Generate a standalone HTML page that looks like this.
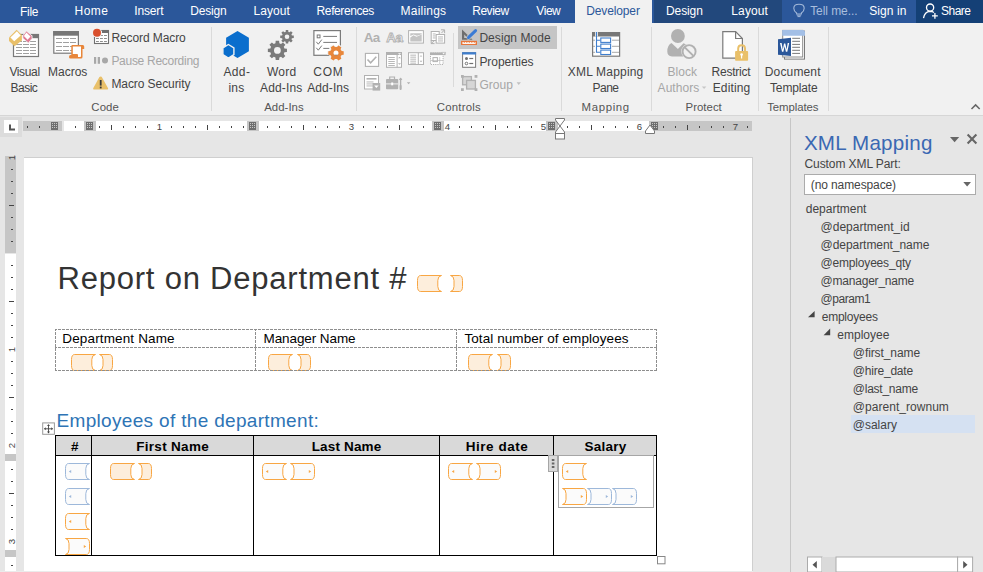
<!DOCTYPE html><html><head><meta charset="utf-8"><style>
html,body{margin:0;padding:0;}
body{width:983px;height:572px;overflow:hidden;position:relative;background:#E6E6E6;font-family:"Liberation Sans",sans-serif;}
.t{position:absolute;white-space:nowrap;line-height:1;}
.r{position:absolute;}
</style></head><body>

<div class="r" style="left:0px;top:0px;width:983px;height:23px;background:#2B579A"></div>
<div class="r" style="left:575px;top:0px;width:77px;height:23px;background:#F1F1F1"></div>
<div class="r" style="left:654px;top:0px;width:128px;height:23px;background:#22487C"></div>
<div class="r" style="left:916px;top:0px;width:67px;height:23px;background:#144076"></div>
<div class="t " style="left:20px;top:5.84px;font-size:12px;color:#FFFFFF;font-weight:normal;letter-spacing:-0.300px;">File</div>
<div class="t " style="left:74.5px;top:4.84px;font-size:12px;color:#FFFFFF;font-weight:normal;letter-spacing:0.500px;">Home</div>
<div class="t " style="left:134.3px;top:4.84px;font-size:12px;color:#FFFFFF;font-weight:normal;letter-spacing:-0.160px;">Insert</div>
<div class="t " style="left:190.2px;top:4.84px;font-size:12px;color:#FFFFFF;font-weight:normal;letter-spacing:-0.180px;">Design</div>
<div class="t " style="left:253.5px;top:4.84px;font-size:12px;color:#FFFFFF;font-weight:normal;letter-spacing:0.080px;">Layout</div>
<div class="t " style="left:316.6px;top:4.84px;font-size:12px;color:#FFFFFF;font-weight:normal;letter-spacing:-0.400px;">References</div>
<div class="t " style="left:400.6px;top:4.84px;font-size:12px;color:#FFFFFF;font-weight:normal;letter-spacing:0.200px;">Mailings</div>
<div class="t " style="left:472.2px;top:4.84px;font-size:12px;color:#FFFFFF;font-weight:normal;letter-spacing:-0.460px;">Review</div>
<div class="t " style="left:536.3px;top:4.84px;font-size:12px;color:#FFFFFF;font-weight:normal;letter-spacing:-0.433px;">View</div>
<div class="t " style="left:586.2px;top:4.84px;font-size:12px;color:#2B579A;font-weight:normal;letter-spacing:-0.125px;">Developer</div>
<div class="t " style="left:666px;top:4.84px;font-size:12px;color:#FFFFFF;font-weight:normal;letter-spacing:-0.100px;">Design</div>
<div class="t " style="left:731.3px;top:4.84px;font-size:12px;color:#FFFFFF;font-weight:normal;letter-spacing:0.120px;">Layout</div>
<div class="t " style="left:810.2px;top:4.84px;font-size:12px;color:#A9BEDD;font-weight:normal;letter-spacing:-0.067px;">Tell me...</div>
<div class="t " style="left:869.2px;top:4.84px;font-size:12px;color:#FFFFFF;font-weight:normal;letter-spacing:0.100px;">Sign in</div>
<div class="t " style="left:941px;top:4.84px;font-size:12px;color:#FFFFFF;font-weight:normal;letter-spacing:-0.500px;">Share</div>
<svg class="r" style="left:0;top:0" width="983" height="23" viewBox="0 0 983 23"><path d="M796.6,13 Q793.8,11 793.8,8.2 Q793.8,4.3 799,4.3 Q804.2,4.3 804.2,8.2 Q804.2,11 801.4,13 L801.4,14 L796.6,14 Z" fill="none" stroke="#A3B9D9" stroke-width="1.1"/><path d="M796.8,15.2 L801.2,15.2 M797.5,16.6 L800.5,16.6" stroke="#A3B9D9" stroke-width="1"/><circle cx="930.1" cy="7.6" r="3.6" fill="none" stroke="#fff" stroke-width="1.3"/><path d="M923.5,18.2 Q924.5,11.8 930.1,11.4 Q932.5,11.5 934,12.5" fill="none" stroke="#fff" stroke-width="1.3"/><path d="M934.9,13 L934.9,18.8 M932,15.9 L937.8,15.9" stroke="#fff" stroke-width="1.3"/></svg>
<div class="r" style="left:0px;top:23px;width:983px;height:92px;background:#F1F1F1"></div>
<div class="r" style="left:0px;top:115px;width:983px;height:1px;background:#D6D6D6"></div>
<div class="r" style="left:211px;top:27px;width:1px;height:84px;background:#DADADA"></div>
<div class="r" style="left:356px;top:27px;width:1px;height:84px;background:#DADADA"></div>
<div class="r" style="left:561px;top:27px;width:1px;height:84px;background:#DADADA"></div>
<div class="r" style="left:651px;top:27px;width:1px;height:84px;background:#DADADA"></div>
<div class="r" style="left:758px;top:27px;width:1px;height:84px;background:#DADADA"></div>
<div class="r" style="left:828px;top:27px;width:1px;height:84px;background:#DADADA"></div>
<div class="r" style="left:453px;top:33px;width:1px;height:54px;background:#DADADA"></div>
<div class="t " style="left:91.3px;top:102.35px;font-size:11.4px;color:#555555;font-weight:normal;letter-spacing:0.133px;">Code</div>
<div class="t " style="left:264.2px;top:102.35px;font-size:11.4px;color:#555555;font-weight:normal;letter-spacing:0.033px;">Add-Ins</div>
<div class="t " style="left:436.7px;top:102.35px;font-size:11.4px;color:#555555;font-weight:normal;letter-spacing:0.243px;">Controls</div>
<div class="t " style="left:581.6px;top:102.35px;font-size:11.4px;color:#555555;font-weight:normal;letter-spacing:0.650px;">Mapping</div>
<div class="t " style="left:685.6px;top:102.35px;font-size:11.4px;color:#555555;font-weight:normal;letter-spacing:0.017px;">Protect</div>
<div class="t " style="left:767.2px;top:102.35px;font-size:11.4px;color:#555555;font-weight:normal;letter-spacing:-0.088px;">Templates</div>
<div class="t " style="left:9.4px;top:65.84px;font-size:12px;color:#444444;font-weight:normal;letter-spacing:-0.360px;">Visual</div>
<div class="t " style="left:10.6px;top:81.84px;font-size:12px;color:#444444;font-weight:normal;letter-spacing:-0.525px;">Basic</div>
<div class="t " style="left:48px;top:65.84px;font-size:12px;color:#444444;font-weight:normal;letter-spacing:0.000px;">Macros</div>
<div class="t " style="left:111.4px;top:31.84px;font-size:12px;color:#444444;font-weight:normal;letter-spacing:-0.091px;">Record Macro</div>
<div class="t " style="left:111.4px;top:54.84px;font-size:12px;color:#A6A6A6;font-weight:normal;letter-spacing:-0.286px;">Pause Recording</div>
<div class="t " style="left:111.4px;top:77.84px;font-size:12px;color:#444444;font-weight:normal;letter-spacing:-0.077px;">Macro Security</div>
<div class="t " style="left:223.4px;top:65.84px;font-size:12px;color:#444444;font-weight:normal;letter-spacing:0.400px;">Add-</div>
<div class="t " style="left:228.5px;top:81.84px;font-size:12px;color:#444444;font-weight:normal;letter-spacing:0.150px;">ins</div>
<div class="t " style="left:267px;top:65.84px;font-size:12px;color:#444444;font-weight:normal;letter-spacing:0.200px;">Word</div>
<div class="t " style="left:260px;top:81.84px;font-size:12px;color:#444444;font-weight:normal;letter-spacing:0.167px;">Add-Ins</div>
<div class="t " style="left:313.3px;top:65.84px;font-size:12px;color:#444444;font-weight:normal;letter-spacing:0.700px;">COM</div>
<div class="t " style="left:307.3px;top:81.84px;font-size:12px;color:#444444;font-weight:normal;letter-spacing:0.067px;">Add-Ins</div>
<div class="r" style="left:458px;top:26px;width:99px;height:23px;background:#C5C5C5"></div>
<div class="t " style="left:479.4px;top:32.14px;font-size:12px;color:#444444;font-weight:normal;letter-spacing:0.060px;">Design Mode</div>
<div class="t " style="left:479.4px;top:55.64px;font-size:12px;color:#444444;font-weight:normal;letter-spacing:-0.056px;">Properties</div>
<div class="t " style="left:479.4px;top:78.54px;font-size:12px;color:#A6A6A6;font-weight:normal;letter-spacing:0.050px;">Group</div>
<div class="t " style="left:567.8px;top:65.84px;font-size:12px;color:#444444;font-weight:normal;letter-spacing:0.190px;">XML Mapping</div>
<div class="t " style="left:592.5px;top:81.84px;font-size:12px;color:#444444;font-weight:normal;letter-spacing:-0.500px;">Pane</div>
<div class="t " style="left:667.4px;top:65.84px;font-size:12px;color:#A6A6A6;font-weight:normal;letter-spacing:0.050px;">Block</div>
<div class="t " style="left:657.6px;top:81.84px;font-size:12px;color:#A6A6A6;font-weight:normal;letter-spacing:0.050px;">Authors</div>
<div class="t " style="left:711.5px;top:65.84px;font-size:12px;color:#444444;font-weight:normal;letter-spacing:-0.214px;">Restrict</div>
<div class="t " style="left:712.7px;top:81.84px;font-size:12px;color:#444444;font-weight:normal;letter-spacing:0.150px;">Editing</div>
<div class="t " style="left:764.8px;top:65.84px;font-size:12px;color:#444444;font-weight:normal;letter-spacing:0.143px;">Document</div>
<div class="t " style="left:770px;top:81.84px;font-size:12px;color:#444444;font-weight:normal;letter-spacing:-0.143px;">Template</div>
<svg class="r" style="left:0;top:0" width="983" height="120" viewBox="0 0 983 120"><rect x="13.5" y="34.5" width="25" height="22" fill="#fff" stroke="#7A7A7A" stroke-width="1.2"/><rect x="32.2" y="34.2" width="6.8" height="4" fill="#777"/><rect x="16" y="41.0" width="6" height="1" fill="#A0A0A0"/><rect x="23" y="41.0" width="6" height="1" fill="#A0A0A0"/><rect x="30" y="41.0" width="6" height="1" fill="#A0A0A0"/><rect x="16" y="44.0" width="6" height="1" fill="#A0A0A0"/><rect x="23" y="44.0" width="6" height="1" fill="#A0A0A0"/><rect x="30" y="44.0" width="6" height="1" fill="#A0A0A0"/><rect x="16" y="47.0" width="6" height="1" fill="#A0A0A0"/><rect x="23" y="47.0" width="6" height="1" fill="#A0A0A0"/><rect x="30" y="47.0" width="6" height="1" fill="#A0A0A0"/><rect x="16" y="50.0" width="6" height="1" fill="#A0A0A0"/><rect x="23" y="50.0" width="6" height="1" fill="#A0A0A0"/><rect x="30" y="50.0" width="6" height="1" fill="#A0A0A0"/><rect x="16" y="53.0" width="6" height="1" fill="#A0A0A0"/><rect x="23" y="53.0" width="6" height="1" fill="#A0A0A0"/><rect x="30" y="53.0" width="6" height="1" fill="#A0A0A0"/><path d="M16.6,29.8 L21.9,35.1 L21.9,40.4 L14.5,46.3 L9,41 L9,37.4 Z" fill="#E9C06A"/><path d="M16.9,31.3 L20.7,35.4 L14.2,41.3 L10.4,37.5 Z" fill="#fff"/><path d="M26.4,30.9 L32,35.9 L32,38.4 L28.5,43.1 L22.9,38.2 L22.9,35.6 Z" fill="#E17A93" stroke="#F1F1F1" stroke-width="0.8"/><path d="M26.4,32.6 L30.5,36.6 L27.6,39.8 L23.9,36 Z" fill="#fff"/><rect x="53.8" y="31.6" width="24.6" height="21.6" fill="#fff" stroke="#7A7A7A" stroke-width="1.2"/><rect x="53.2" y="31.1" width="25.7" height="4.6" fill="#777"/><rect x="56" y="38.0" width="6" height="1" fill="#A0A0A0"/><rect x="63" y="38.0" width="6" height="1" fill="#A0A0A0"/><rect x="70" y="38.0" width="6" height="1" fill="#A0A0A0"/><rect x="56" y="42.0" width="6" height="1" fill="#A0A0A0"/><rect x="63" y="42.0" width="6" height="1" fill="#A0A0A0"/><rect x="70" y="42.0" width="6" height="1" fill="#A0A0A0"/><rect x="56" y="46.0" width="6" height="1" fill="#A0A0A0"/><rect x="63" y="46.0" width="6" height="1" fill="#A0A0A0"/><rect x="70" y="46.0" width="6" height="1" fill="#A0A0A0"/><rect x="56" y="50.0" width="6" height="1" fill="#A0A0A0"/><rect x="63" y="50.0" width="6" height="1" fill="#A0A0A0"/><rect x="70" y="50.0" width="6" height="1" fill="#A0A0A0"/><path d="M71.3,46.2 Q71.3,45 72.5,45 L82.8,45 Q84.2,45 84.2,46.5 L84.2,49 L82.5,49 L82.5,57 Q82.5,58.6 81,58.6 L70.5,58.6 Q69,58.6 69,57 Q69,55 70.5,55 L71.3,55 Z" fill="#E8863A"/><path d="M72.8,46.6 L81,46.6 L81,56.2 Q81,57 80,57 L78,57 L78,55 Q78,54 77,54 L72.8,54 Z" fill="#fff"/><rect x="94.5" y="30.5" width="14" height="13" fill="#fff" stroke="#707070" stroke-width="1.1"/><rect x="102" y="30" width="7" height="3" fill="#6F6F6F"/><rect x="96" y="35" width="2.9" height="1" fill="#8E8E8E"/><rect x="100" y="35" width="2.9" height="1" fill="#8E8E8E"/><rect x="104" y="35" width="2.9" height="1" fill="#8E8E8E"/><rect x="96" y="38" width="2.9" height="1" fill="#8E8E8E"/><rect x="100" y="38" width="2.9" height="1" fill="#8E8E8E"/><rect x="104" y="38" width="2.9" height="1" fill="#8E8E8E"/><rect x="96" y="41" width="2.9" height="1" fill="#8E8E8E"/><rect x="100" y="41" width="2.9" height="1" fill="#8E8E8E"/><rect x="104" y="41" width="2.9" height="1" fill="#8E8E8E"/><circle cx="97" cy="32.8" r="4.9" fill="#F1F1F1"/><circle cx="97" cy="32.8" r="4" fill="#D9502E"/><rect x="94" y="57" width="2.2" height="6.8" fill="#A8A8A8"/><rect x="97.7" y="57" width="2.3" height="6.8" fill="#A8A8A8"/><circle cx="105" cy="60.4" r="3" fill="#A8A8A8"/><path d="M100.6,76.6 Q101.3,76.2 101.8,77 L108.1,88.3 Q108.4,89.6 107.2,89.6 L94,89.6 Q92.8,89.6 93.2,88.3 L99.4,77 Z" fill="#E9C06A"/><rect x="99.8" y="80" width="1.8" height="5.6" fill="#3A3A3A"/><rect x="99.8" y="86.6" width="1.8" height="1.8" fill="#3A3A3A"/><path d="M237.5,31.1 L248.9,37.8 L248.9,51.3 L237.5,58 L226.1,51.3 L226.1,37.8 Z" fill="#0A6ECD"/><path d="M228.4,44.5 L233.9,47.9 L233.9,54.6 L228.4,58 L222.9,54.6 L222.9,47.9 Z" fill="#0A6ECD" stroke="#F1F1F1" stroke-width="1.4"/><path d="M275.45,43.37 L275.69,40.85 L279.11,40.85 L279.35,43.37 L280.99,44.04 L282.95,42.44 L285.36,44.85 L283.76,46.81 L284.43,48.45 L286.95,48.69 L286.95,52.11 L284.43,52.35 L283.76,53.99 L285.36,55.95 L282.95,58.36 L280.99,56.76 L279.35,57.43 L279.11,59.95 L275.69,59.95 L275.45,57.43 L273.81,56.76 L271.85,58.36 L269.44,55.95 L271.04,53.99 L270.37,52.35 L267.85,52.11 L267.85,48.69 L270.37,48.45 L271.04,46.81 L269.44,44.85 L271.85,42.44 L273.81,44.04 Z M280.80,50.40 A3.4,3.4 0 1 0 274.00,50.40 A3.4,3.4 0 1 0 280.80,50.40 Z" fill="#7A7A7A" fill-rule="evenodd"/><path d="M285.63,31.89 L285.79,30.01 L288.21,30.01 L288.37,31.89 L289.51,32.36 L290.95,31.14 L292.66,32.85 L291.44,34.29 L291.91,35.43 L293.79,35.59 L293.79,38.01 L291.91,38.17 L291.44,39.31 L292.66,40.75 L290.95,42.46 L289.51,41.24 L288.37,41.71 L288.21,43.59 L285.79,43.59 L285.63,41.71 L284.49,41.24 L283.05,42.46 L281.34,40.75 L282.56,39.31 L282.09,38.17 L280.21,38.01 L280.21,35.59 L282.09,35.43 L282.56,34.29 L281.34,32.85 L283.05,31.14 L284.49,32.36 Z M289.30,36.80 A2.3,2.3 0 1 0 284.70,36.80 A2.3,2.3 0 1 0 289.30,36.80 Z" fill="#7A7A7A" fill-rule="evenodd"/><rect x="313.9" y="30.6" width="26.5" height="24.7" fill="#fff" stroke="#7A7A7A" stroke-width="1.2"/><rect x="317.2" y="35" width="2.8" height="2.8" fill="none" stroke="#7A7A7A" stroke-width="1"/><rect x="323.3" y="35.9" width="13.7" height="1" fill="#7A7A7A"/><rect x="323.3" y="41.9" width="13.7" height="1" fill="#7A7A7A"/><rect x="323.3" y="47.9" width="6" height="1" fill="#7A7A7A"/><path d="M316.3,41.8 L318.3,44.2 L321.8,39.6 M316.3,47.8 L318.3,50.2 L321.8,45.6" fill="none" stroke="#7A7A7A" stroke-width="1"/><path d="M342.80,50.63 L344.80,51.13 L344.80,54.87 L342.80,55.37 L341.45,57.70 L342.02,59.69 L338.78,61.56 L337.35,60.07 L334.65,60.07 L333.22,61.56 L329.98,59.69 L330.55,57.70 L329.20,55.37 L327.20,54.87 L327.20,51.13 L329.20,50.63 L330.55,48.30 L329.98,46.31 L333.22,44.44 L334.65,45.93 L337.35,45.93 L338.78,44.44 L342.02,46.31 L341.45,48.30 Z M339.60,53.00 A3.6,3.6 0 1 0 332.40,53.00 A3.6,3.6 0 1 0 339.60,53.00 Z" fill="#F1F1F1"/><path d="M341.65,50.97 L343.71,51.28 L343.71,54.72 L341.65,55.03 L340.58,56.87 L341.35,58.82 L338.36,60.54 L337.06,58.91 L334.94,58.91 L333.64,60.54 L330.65,58.82 L331.42,56.87 L330.35,55.03 L328.29,54.72 L328.29,51.28 L330.35,50.97 L331.42,49.13 L330.65,47.18 L333.64,45.46 L334.94,47.09 L337.06,47.09 L338.36,45.46 L341.35,47.18 L340.58,49.13 Z M338.50,53.00 A2.5,2.5 0 1 0 333.50,53.00 A2.5,2.5 0 1 0 338.50,53.00 Z" fill="#E8863A" fill-rule="evenodd"/><path d="M971.5,109 L975.6,104.9 L979.7,109" fill="none" stroke="#666" stroke-width="1.5"/></svg>
<svg class="r" style="left:0;top:0" width="983" height="120" viewBox="0 0 983 120"><text x="363.8" y="41.6" font-family="Liberation Sans" font-weight="bold" font-size="13.4" fill="#B1B1B1" letter-spacing="-0.6">Aa</text><text x="386.3" y="41.6" font-family="Liberation Sans" font-weight="bold" font-size="13.4" fill="#FFFFFF" stroke="#B1B1B1" stroke-width="0.9" letter-spacing="-0.5">Aa</text><rect x="408.6" y="30.6" width="14.8" height="12.5" fill="#fff" stroke="#B1B1B1" stroke-width="1"/><path d="M410.3,37.5 L413.5,35.3 L416.5,36.8 L421.7,34.5 L421.7,41.5 L410.3,41.5 Z" fill="#C4C4C4"/><path d="M410.3,33.2 L421.7,33.2 L421.7,34.2 L417,35.8 L413.5,34.5 L410.3,36 Z" fill="#C4C4C4"/><rect x="431.2" y="31.5" width="8" height="9" fill="#fff" stroke="#B1B1B1" stroke-width="1"/><rect x="436.2" y="34.5" width="8.4" height="8.6" fill="#fff" stroke="#B1B1B1" stroke-width="1"/><rect x="438" y="36.5" width="5" height="0.9" fill="#B1B1B1"/><rect x="438" y="38.5" width="5" height="0.9" fill="#B1B1B1"/><rect x="438" y="40.5" width="5" height="0.9" fill="#B1B1B1"/><rect x="432.8" y="33.5" width="2.8" height="0.9" fill="#B1B1B1"/><rect x="432.8" y="35.5" width="2.8" height="0.9" fill="#B1B1B1"/><rect x="432.8" y="37.5" width="2.8" height="0.9" fill="#B1B1B1"/><path d="M441,29.8 L444.6,29.8 L444.6,33.2 M444.4,30 L441.5,33" fill="none" stroke="#B1B1B1" stroke-width="1"/><path d="M431,43.6 L434.5,43.6 M431.2,40.4 L431.2,43.6 L434,40.9" fill="none" stroke="#B1B1B1" stroke-width="1"/><rect x="365.4" y="53.4" width="13.2" height="13" fill="#fff" stroke="#B1B1B1" stroke-width="1.1"/><path d="M367.5,59.5 L370.6,62.8 L376.3,56.8" fill="none" stroke="#B1B1B1" stroke-width="1.6"/><rect x="386.5" y="52.5" width="15" height="14.8" fill="#fff" stroke="#B1B1B1" stroke-width="1"/><rect x="386.5" y="52.5" width="15" height="2.5" fill="#B1B1B1"/><rect x="396.6" y="52.5" width="1" height="14.8" fill="#B1B1B1"/><rect x="388.3" y="57" width="6.5" height="0.9" fill="#B1B1B1"/><rect x="388.3" y="59" width="6.5" height="0.9" fill="#B1B1B1"/><rect x="388.3" y="61" width="6.5" height="0.9" fill="#B1B1B1"/><rect x="388.3" y="63" width="6.5" height="0.9" fill="#B1B1B1"/><rect x="388.3" y="65" width="6.5" height="0.9" fill="#B1B1B1"/><path d="M398,53.3 L401,53.3 L399.5,54.8 Z M398,57.8 L401,57.8 L399.5,56.3 Z M398,63.5 L401,63.5 L399.5,65 Z" fill="#fff"/><path d="M398,58.2 L401,58.2 L399.5,56.7 Z M398,63.2 L401,63.2 L399.5,64.7 Z" fill="#B1B1B1"/><rect x="408.5" y="52.7" width="15" height="11.8" fill="#fff" stroke="#B1B1B1" stroke-width="1"/><rect x="417.8" y="52.7" width="1" height="11.8" fill="#B1B1B1"/><rect x="410.3" y="54.7" width="5.8" height="0.9" fill="#B1B1B1"/><rect x="410.3" y="56.7" width="5.8" height="0.9" fill="#B1B1B1"/><rect x="410.3" y="58.7" width="5.8" height="0.9" fill="#B1B1B1"/><rect x="410.3" y="60.7" width="5.8" height="0.9" fill="#B1B1B1"/><rect x="410.3" y="62.7" width="5.8" height="0.9" fill="#B1B1B1"/><path d="M419.6,56.6 L422.4,56.6 L421,55.2 Z M419.6,60.8 L422.4,60.8 L421,62.2 Z" fill="#B1B1B1"/><rect x="430.5" y="53" width="12.6" height="11.5" fill="#fff" stroke="#B1B1B1" stroke-width="1" stroke-dasharray="1.2,1"/><rect x="430" y="52.5" width="15.6" height="2.6" fill="#B1B1B1"/><path d="M441.6,52.4 L445.7,52.4 L443.65,54.5 Z" fill="#fff" stroke="#B1B1B1" stroke-width="0.6"/><rect x="433" y="57.6" width="4.4" height="4" fill="none" stroke="#B1B1B1" stroke-width="1"/><rect x="439.2" y="57" width="1" height="7" fill="#B1B1B1" opacity="0.6"/><rect x="431" y="60" width="12" height="1" fill="#B1B1B1" opacity="0.6"/><rect x="364.5" y="75.5" width="14" height="13.5" fill="#fff" stroke="#B1B1B1" stroke-width="1"/><rect x="366.5" y="78" width="10" height="1.6" fill="#B1B1B1"/><rect x="366.5" y="81.5" width="7" height="0.9" fill="#B1B1B1"/><rect x="366.5" y="83.5" width="7" height="0.9" fill="#B1B1B1"/><rect x="366.5" y="85.5" width="7" height="0.9" fill="#B1B1B1"/><rect x="372.6" y="83" width="7.6" height="7.6" fill="#B1B1B1"/><path d="M374.2,85.5 L378.6,85.5 L376.4,88 Z" fill="#fff"/><path d="M389.7,79.2 L389.7,77 L394.5,77 L394.5,79.2" fill="none" stroke="#B1B1B1" stroke-width="1.2"/><rect x="386" y="79" width="12.2" height="10.2" rx="0.8" fill="#B1B1B1"/><rect x="386" y="83.4" width="12.2" height="1" fill="#F1F1F1"/><rect x="391.2" y="82.5" width="2" height="2.8" fill="#fff"/><path d="M400.6,78 L400.6,88.8" stroke="#B1B1B1" stroke-width="1.4"/><path d="M398.8,80 L400.6,77.4 L402.4,80 Z" fill="#B1B1B1"/><rect x="399.6" y="85" width="2" height="5" rx="0.8" fill="#B1B1B1"/><path d="M406.8,82.3 L410.4,82.3 L408.6,84.3 Z" fill="#B1B1B1"/><path d="M462,29.5 L462,39.8 L472.6,39.8 Z" fill="#6E6E6E"/><path d="M464.2,34.6 L464.2,37.9 L467.6,37.9 Z" fill="#C5C5C5"/><path d="M468.6,37.4 L475.6,30.6" stroke="#C5C5C5" stroke-width="4.6" stroke-linecap="round"/><path d="M468.6,37.4 L475.6,30.6" stroke="#3A7BD5" stroke-width="3" stroke-linecap="round"/><path d="M467,39 L468.2,36.2 L469.8,37.8 Z" fill="#3A7BD5"/><rect x="461" y="40.8" width="16" height="4.2" fill="#E8763A"/><rect x="462.4" y="42.1" width="13.2" height="1.8" fill="#FFFFFF"/><rect x="463.8" y="42.1" width="1" height="0.8" fill="#E8763A"/><rect x="466.3" y="42.1" width="1" height="0.8" fill="#E8763A"/><rect x="468.8" y="42.1" width="1" height="0.8" fill="#E8763A"/><rect x="471.3" y="42.1" width="1" height="0.8" fill="#E8763A"/><rect x="473.8" y="42.1" width="1" height="0.8" fill="#E8763A"/><rect x="462.6" y="52.7" width="13" height="14.6" fill="#fff" stroke="#7A7A7A" stroke-width="1"/><rect x="462.1" y="52.2" width="14" height="2.3" fill="#3F7ECD"/><circle cx="466.5" cy="58.4" r="1.5" fill="#707070"/><rect x="469.3" y="57.9" width="3.9" height="1.2" fill="#707070"/><circle cx="466.5" cy="63.5" r="1.3" fill="none" stroke="#707070" stroke-width="1"/><rect x="469.3" y="62.9" width="3.9" height="1.2" fill="#707070"/><rect x="462.6" y="76.6" width="8.8" height="8.2" fill="#D6D6D6" stroke="#B1B1B1" stroke-width="1.3"/><rect x="466.6" y="80.4" width="8.8" height="8.6" fill="#D6D6D6" stroke="#B1B1B1" stroke-width="1.3"/><rect x="461" y="75" width="2.8" height="2.8" fill="#B1B1B1"/><rect x="474.6" y="75" width="2.8" height="2.8" fill="#B1B1B1"/><rect x="461" y="88.2" width="2.8" height="2.8" fill="#B1B1B1"/><rect x="474.6" y="88.2" width="2.8" height="2.8" fill="#B1B1B1"/><path d="M516.6,82.2 L520.9,82.2 L518.75,85 Z" fill="#C0C0C0"/><rect x="592.6" y="32.6" width="27" height="23.6" fill="#fff" stroke="#7A7A7A" stroke-width="1.2"/><rect x="592" y="32" width="28" height="4.5" fill="#777"/><rect x="595.2" y="32" width="2.6" height="4.5" fill="#fff"/><path d="M596.5,32 L596.5,52.3 L600.4,52.3 M596.5,40.2 L600.4,40.2 M596.5,46.3 L600.4,46.3" fill="none" stroke="#3F7ECD" stroke-width="1.1"/><rect x="600.8" y="38.0" width="9.8" height="4.4" fill="#fff" stroke="#3F7ECD" stroke-width="1.1"/><rect x="612" y="39.7" width="7" height="1" fill="#A8A8A8"/><rect x="593" y="39.7" width="2" height="1" fill="#A8A8A8"/><rect x="600.8" y="44.099999999999994" width="9.8" height="4.4" fill="#fff" stroke="#3F7ECD" stroke-width="1.1"/><rect x="612" y="45.8" width="7" height="1" fill="#A8A8A8"/><rect x="593" y="45.8" width="2" height="1" fill="#A8A8A8"/><rect x="600.8" y="50.099999999999994" width="9.8" height="4.4" fill="#fff" stroke="#3F7ECD" stroke-width="1.1"/><rect x="612" y="51.8" width="7" height="1" fill="#A8A8A8"/><rect x="593" y="51.8" width="2" height="1" fill="#A8A8A8"/><circle cx="677.9" cy="36" r="6.9" fill="#B1B1B1"/><path d="M671.5,43 L677.9,49 L683.5,43.3 Q686,44 687,45.5 L683,56.5 L672,56.5 Q667.3,55.8 667.3,51.5 Q667.3,45 671.5,43 Z" fill="#B1B1B1"/><circle cx="689.1" cy="51.6" r="7.8" fill="#F1F1F1"/><circle cx="689.1" cy="51.6" r="6.5" fill="none" stroke="#B1B1B1" stroke-width="1.9"/><path d="M684.8,47.3 L693.4,55.9" stroke="#B1B1B1" stroke-width="1.9"/><path d="M701.8,86.4 L706.4,86.4 L704.1,89 Z" fill="#C8C8C8"/><path d="M722.8,31.7 L735.6,31.7 L742.4,38.5 L742.4,58.2 L722.8,58.2 Z" fill="#fff" stroke="#7A7A7A" stroke-width="1.2"/><path d="M735.6,31.7 L735.6,38.5 L742.4,38.5" fill="none" stroke="#7A7A7A" stroke-width="1.2"/><path d="M738.2,51.3 L738.2,48.6 Q738.2,45.2 741.6,45.2 Q745,45.2 745,48.6 L745,51.3" fill="none" stroke="#E9C06A" stroke-width="2"/><rect x="735.1" y="51.1" width="13" height="9.6" rx="0.8" fill="#E9C06A"/><circle cx="741.6" cy="54.6" r="1.3" fill="#fff"/><rect x="741" y="55" width="1.2" height="3.5" fill="#fff"/><rect x="784.5" y="31.1" width="20" height="28" fill="#fff" stroke="#7A7A7A" stroke-width="1"/><rect x="782.7" y="30.4" width="20" height="26.6" fill="#fff" stroke="#8A8A8A" stroke-width="1"/><path d="M782.2,29.9 L803.4,29.9 L805,31.5 L805,35.8 L782.2,35.8 Z" fill="#A3BFE6"/><rect x="792.2" y="37.8" width="7.8" height="1" fill="#7A7A7A"/><rect x="792.2" y="40.8" width="7.8" height="1" fill="#7A7A7A"/><rect x="792.2" y="43.9" width="7.8" height="1" fill="#7A7A7A"/><rect x="792.2" y="46.8" width="7.8" height="1" fill="#7A7A7A"/><rect x="792.2" y="49.8" width="7.8" height="1" fill="#7A7A7A"/><rect x="792.2" y="52.9" width="7.8" height="1" fill="#7A7A7A"/><path d="M778,39.2 L791,37.8 L791,56 L778,54.8 Z" fill="#2B579A"/><path d="M780,43 L781.6,43 L782.8,49.5 L784,43.5 L785.3,43.5 L786.6,49.5 L787.7,43 L789.2,43 L787.3,51.8 L785.9,51.8 L784.6,46.2 L783.4,51.8 L782,51.8 Z" fill="#fff"/></svg>
<div class="r" style="left:0px;top:117px;width:22px;height:20px;background:#DCDCDC"></div>
<div class="r" style="left:4px;top:120px;width:14px;height:13px;background:#FFFFFF"></div>
<svg class="r" style="left:0;top:115px" width="983" height="30" viewBox="0 115 983 30"><path d="M10,124.5 L10,129.5 L15,129.5" fill="none" stroke="#555" stroke-width="2"/></svg>
<div class="r" style="left:23px;top:121px;width:729px;height:10px;background:#FFFFFF"></div>
<div class="r" style="left:23px;top:121px;width:39px;height:10px;background:#C6C6C6"></div>
<div class="r" style="left:62px;top:121px;width:2px;height:10px;background:#E6E6E6"></div>
<div class="r" style="left:650px;top:121px;width:102px;height:10px;background:#C6C6C6"></div>
<svg class="r" style="left:0;top:115px" width="983" height="30" viewBox="0 115 983 30"><rect x="27" y="126" width="1" height="2" fill="#444"/><rect x="39" y="126" width="1" height="2" fill="#444"/><rect x="51" y="126" width="1" height="2" fill="#444"/><rect x="75" y="126" width="1" height="2" fill="#444"/><rect x="87" y="126" width="1" height="2" fill="#444"/><rect x="99" y="126" width="1" height="2" fill="#444"/><rect x="111" y="125" width="1" height="5" fill="#444"/><rect x="123" y="126" width="1" height="2" fill="#444"/><rect x="135" y="126" width="1" height="2" fill="#444"/><rect x="147" y="126" width="1" height="2" fill="#444"/><text x="159.5" y="130" font-size="9.6" fill="#444" text-anchor="middle" font-family="Liberation Sans">1</text><rect x="171" y="126" width="1" height="2" fill="#444"/><rect x="183" y="126" width="1" height="2" fill="#444"/><rect x="195" y="126" width="1" height="2" fill="#444"/><rect x="207" y="125" width="1" height="5" fill="#444"/><rect x="219" y="126" width="1" height="2" fill="#444"/><rect x="231" y="126" width="1" height="2" fill="#444"/><rect x="243" y="126" width="1" height="2" fill="#444"/><text x="255.5" y="130" font-size="9.6" fill="#444" text-anchor="middle" font-family="Liberation Sans">2</text><rect x="267" y="126" width="1" height="2" fill="#444"/><rect x="279" y="126" width="1" height="2" fill="#444"/><rect x="291" y="126" width="1" height="2" fill="#444"/><rect x="303" y="125" width="1" height="5" fill="#444"/><rect x="315" y="126" width="1" height="2" fill="#444"/><rect x="327" y="126" width="1" height="2" fill="#444"/><rect x="339" y="126" width="1" height="2" fill="#444"/><text x="351.5" y="130" font-size="9.6" fill="#444" text-anchor="middle" font-family="Liberation Sans">3</text><rect x="363" y="126" width="1" height="2" fill="#444"/><rect x="375" y="126" width="1" height="2" fill="#444"/><rect x="387" y="126" width="1" height="2" fill="#444"/><rect x="399" y="125" width="1" height="5" fill="#444"/><rect x="411" y="126" width="1" height="2" fill="#444"/><rect x="423" y="126" width="1" height="2" fill="#444"/><rect x="435" y="126" width="1" height="2" fill="#444"/><text x="447.5" y="130" font-size="9.6" fill="#444" text-anchor="middle" font-family="Liberation Sans">4</text><rect x="459" y="126" width="1" height="2" fill="#444"/><rect x="471" y="126" width="1" height="2" fill="#444"/><rect x="483" y="126" width="1" height="2" fill="#444"/><rect x="495" y="125" width="1" height="5" fill="#444"/><rect x="507" y="126" width="1" height="2" fill="#444"/><rect x="519" y="126" width="1" height="2" fill="#444"/><rect x="531" y="126" width="1" height="2" fill="#444"/><text x="543.5" y="130" font-size="9.6" fill="#444" text-anchor="middle" font-family="Liberation Sans">5</text><rect x="555" y="126" width="1" height="2" fill="#444"/><rect x="567" y="126" width="1" height="2" fill="#444"/><rect x="579" y="126" width="1" height="2" fill="#444"/><rect x="591" y="125" width="1" height="5" fill="#444"/><rect x="603" y="126" width="1" height="2" fill="#444"/><rect x="615" y="126" width="1" height="2" fill="#444"/><rect x="627" y="126" width="1" height="2" fill="#444"/><text x="639.5" y="130" font-size="9.6" fill="#444" text-anchor="middle" font-family="Liberation Sans">6</text><rect x="651" y="126" width="1" height="2" fill="#444"/><rect x="663" y="126" width="1" height="2" fill="#444"/><rect x="675" y="126" width="1" height="2" fill="#444"/><rect x="687" y="125" width="1" height="5" fill="#444"/><rect x="699" y="126" width="1" height="2" fill="#444"/><rect x="711" y="126" width="1" height="2" fill="#444"/><rect x="723" y="126" width="1" height="2" fill="#444"/><text x="735.5" y="130" font-size="9.6" fill="#444" text-anchor="middle" font-family="Liberation Sans">7</text><rect x="747" y="126" width="1" height="2" fill="#444"/><rect x="49" y="121" width="12" height="10" fill="#C6C6C6"/><rect x="51" y="122" width="7" height="8" fill="#6E6E6E"/><rect x="52" y="123" width="1" height="1" fill="#C6C6C6"/><rect x="52" y="125" width="1" height="1" fill="#C6C6C6"/><rect x="52" y="127" width="1" height="1" fill="#C6C6C6"/><rect x="54" y="123" width="1" height="1" fill="#C6C6C6"/><rect x="54" y="125" width="1" height="1" fill="#C6C6C6"/><rect x="54" y="127" width="1" height="1" fill="#C6C6C6"/><rect x="56" y="123" width="1" height="1" fill="#C6C6C6"/><rect x="56" y="125" width="1" height="1" fill="#C6C6C6"/><rect x="56" y="127" width="1" height="1" fill="#C6C6C6"/><rect x="84" y="121" width="12" height="10" fill="#C6C6C6"/><rect x="86" y="122" width="7" height="8" fill="#6E6E6E"/><rect x="87" y="123" width="1" height="1" fill="#C6C6C6"/><rect x="87" y="125" width="1" height="1" fill="#C6C6C6"/><rect x="87" y="127" width="1" height="1" fill="#C6C6C6"/><rect x="89" y="123" width="1" height="1" fill="#C6C6C6"/><rect x="89" y="125" width="1" height="1" fill="#C6C6C6"/><rect x="89" y="127" width="1" height="1" fill="#C6C6C6"/><rect x="91" y="123" width="1" height="1" fill="#C6C6C6"/><rect x="91" y="125" width="1" height="1" fill="#C6C6C6"/><rect x="91" y="127" width="1" height="1" fill="#C6C6C6"/><rect x="247" y="121" width="12" height="10" fill="#C6C6C6"/><rect x="249" y="122" width="7" height="8" fill="#6E6E6E"/><rect x="250" y="123" width="1" height="1" fill="#C6C6C6"/><rect x="250" y="125" width="1" height="1" fill="#C6C6C6"/><rect x="250" y="127" width="1" height="1" fill="#C6C6C6"/><rect x="252" y="123" width="1" height="1" fill="#C6C6C6"/><rect x="252" y="125" width="1" height="1" fill="#C6C6C6"/><rect x="252" y="127" width="1" height="1" fill="#C6C6C6"/><rect x="254" y="123" width="1" height="1" fill="#C6C6C6"/><rect x="254" y="125" width="1" height="1" fill="#C6C6C6"/><rect x="254" y="127" width="1" height="1" fill="#C6C6C6"/><rect x="432" y="121" width="12" height="10" fill="#C6C6C6"/><rect x="434" y="122" width="7" height="8" fill="#6E6E6E"/><rect x="435" y="123" width="1" height="1" fill="#C6C6C6"/><rect x="435" y="125" width="1" height="1" fill="#C6C6C6"/><rect x="435" y="127" width="1" height="1" fill="#C6C6C6"/><rect x="437" y="123" width="1" height="1" fill="#C6C6C6"/><rect x="437" y="125" width="1" height="1" fill="#C6C6C6"/><rect x="437" y="127" width="1" height="1" fill="#C6C6C6"/><rect x="439" y="123" width="1" height="1" fill="#C6C6C6"/><rect x="439" y="125" width="1" height="1" fill="#C6C6C6"/><rect x="439" y="127" width="1" height="1" fill="#C6C6C6"/><rect x="546" y="121" width="12" height="10" fill="#C6C6C6"/><rect x="548" y="122" width="7" height="8" fill="#6E6E6E"/><rect x="549" y="123" width="1" height="1" fill="#C6C6C6"/><rect x="549" y="125" width="1" height="1" fill="#C6C6C6"/><rect x="549" y="127" width="1" height="1" fill="#C6C6C6"/><rect x="551" y="123" width="1" height="1" fill="#C6C6C6"/><rect x="551" y="125" width="1" height="1" fill="#C6C6C6"/><rect x="551" y="127" width="1" height="1" fill="#C6C6C6"/><rect x="553" y="123" width="1" height="1" fill="#C6C6C6"/><rect x="553" y="125" width="1" height="1" fill="#C6C6C6"/><rect x="553" y="127" width="1" height="1" fill="#C6C6C6"/><rect x="649" y="121" width="12" height="10" fill="#C6C6C6"/><rect x="651" y="122" width="7" height="8" fill="#6E6E6E"/><rect x="652" y="123" width="1" height="1" fill="#C6C6C6"/><rect x="652" y="125" width="1" height="1" fill="#C6C6C6"/><rect x="652" y="127" width="1" height="1" fill="#C6C6C6"/><rect x="654" y="123" width="1" height="1" fill="#C6C6C6"/><rect x="654" y="125" width="1" height="1" fill="#C6C6C6"/><rect x="654" y="127" width="1" height="1" fill="#C6C6C6"/><rect x="656" y="123" width="1" height="1" fill="#C6C6C6"/><rect x="656" y="125" width="1" height="1" fill="#C6C6C6"/><rect x="656" y="127" width="1" height="1" fill="#C6C6C6"/><path d="M555.5,118.5 L564.5,118.5 L564.5,120 L560,126 L555.5,120 Z" fill="#fff" stroke="#777" stroke-width="1"/><path d="M560,126 L564.5,132 L564.5,133.5 L555.5,133.5 L555.5,132 Z" fill="#fff" stroke="#777" stroke-width="1"/><rect x="555.5" y="133.5" width="9" height="5.5" fill="#fff" stroke="#777" stroke-width="1"/><path d="M645.5,133.5 L645.5,131 L650,125 L654.5,131 L654.5,133.5 Z" fill="#fff" stroke="#777" stroke-width="1"/></svg>
<div class="r" style="left:5px;top:156px;width:11px;height:415px;background:#FFFFFF"></div>
<div class="r" style="left:5px;top:156px;width:11px;height:98px;background:#C6C6C6"></div>
<div class="r" style="left:5px;top:253px;width:11px;height:1px;background:#E6E6E6"></div>
<div class="r" style="left:5px;top:454px;width:11px;height:7px;background:#C6C6C6"></div>
<div class="r" style="left:5px;top:550px;width:11px;height:7px;background:#C6C6C6"></div>
<svg class="r" style="left:0;top:150px" width="24" height="422" viewBox="0 150 24 422"><text x="0" y="0" transform="translate(15,157.5) rotate(-90)" font-size="9.6" fill="#444" text-anchor="middle" font-family="Liberation Sans">1</text><rect x="11" y="169" width="2" height="1" fill="#444"/><rect x="11" y="181" width="2" height="1" fill="#444"/><rect x="11" y="193" width="2" height="1" fill="#444"/><rect x="9" y="205" width="5" height="1" fill="#444"/><rect x="11" y="217" width="2" height="1" fill="#444"/><rect x="11" y="229" width="2" height="1" fill="#444"/><rect x="11" y="241" width="2" height="1" fill="#444"/><rect x="11" y="265" width="2" height="1" fill="#444"/><rect x="11" y="277" width="2" height="1" fill="#444"/><rect x="11" y="289" width="2" height="1" fill="#444"/><rect x="9" y="301" width="5" height="1" fill="#444"/><rect x="11" y="313" width="2" height="1" fill="#444"/><rect x="11" y="325" width="2" height="1" fill="#444"/><rect x="11" y="337" width="2" height="1" fill="#444"/><text x="0" y="0" transform="translate(15,349.5) rotate(-90)" font-size="9.6" fill="#444" text-anchor="middle" font-family="Liberation Sans">1</text><rect x="11" y="361" width="2" height="1" fill="#444"/><rect x="11" y="373" width="2" height="1" fill="#444"/><rect x="11" y="385" width="2" height="1" fill="#444"/><rect x="9" y="397" width="5" height="1" fill="#444"/><rect x="11" y="409" width="2" height="1" fill="#444"/><rect x="11" y="421" width="2" height="1" fill="#444"/><rect x="11" y="433" width="2" height="1" fill="#444"/><text x="0" y="0" transform="translate(15,445.5) rotate(-90)" font-size="9.6" fill="#444" text-anchor="middle" font-family="Liberation Sans">2</text><rect x="11" y="469" width="2" height="1" fill="#444"/><rect x="11" y="481" width="2" height="1" fill="#444"/><rect x="9" y="493" width="5" height="1" fill="#444"/><rect x="11" y="505" width="2" height="1" fill="#444"/><rect x="11" y="517" width="2" height="1" fill="#444"/><rect x="11" y="529" width="2" height="1" fill="#444"/><text x="0" y="0" transform="translate(15,541.5) rotate(-90)" font-size="9.6" fill="#444" text-anchor="middle" font-family="Liberation Sans">3</text><rect x="11" y="565" width="2" height="1" fill="#444"/></svg>
<div class="r" style="left:24px;top:157px;width:728px;height:414px;background:#FFFFFF"></div>
<div class="r" style="left:24px;top:157px;width:728px;height:1px;background:#CFCFCF"></div>
<div class="r" style="left:752px;top:157px;width:1px;height:414px;background:#CFCFCF"></div>
<div class="r" style="left:0px;top:571px;width:753px;height:1px;background:#EBEBEB"></div>
<div class="r" style="left:790px;top:118px;width:1px;height:454px;background:#C6C6C6"></div>
<div class="t " style="left:57.5px;top:263.46px;font-size:31px;color:#333333;font-weight:normal;letter-spacing:0.786px;">Report on Department #</div>
<div class="t " style="left:56.5px;top:410.92px;font-size:19px;color:#2E74B5;font-weight:normal;letter-spacing:0.326px;">Employees of the department:</div>
<div class="t " style="left:62.3px;top:332.47px;font-size:13.5px;color:#000000;font-weight:normal;letter-spacing:0.143px;">Department Name</div>
<div class="t " style="left:263.5px;top:332.47px;font-size:13.5px;color:#000000;font-weight:normal;letter-spacing:-0.091px;">Manager Name</div>
<div class="t " style="left:464.4px;top:332.47px;font-size:13.5px;color:#000000;font-weight:normal;letter-spacing:0.083px;">Total number of employees</div>
<div class="r" style="left:55px;top:435px;width:602px;height:121px;background:#fff"></div>
<div class="r" style="left:56px;top:436px;width:600px;height:19px;background:#D9D9D9"></div>
<div class="t " style="left:71px;top:440.27px;font-size:13.5px;color:#000000;font-weight:bold;letter-spacing:-0.100px;">#</div>
<div class="t " style="left:136.2px;top:440.27px;font-size:13.5px;color:#000000;font-weight:bold;letter-spacing:0.311px;">First Name</div>
<div class="t " style="left:311.7px;top:440.27px;font-size:13.5px;color:#000000;font-weight:bold;letter-spacing:0.162px;">Last Name</div>
<div class="t " style="left:465.7px;top:440.27px;font-size:13.5px;color:#000000;font-weight:bold;letter-spacing:0.550px;">Hire date</div>
<div class="t " style="left:584.4px;top:440.27px;font-size:13.5px;color:#000000;font-weight:bold;letter-spacing:0.260px;">Salary</div>
<svg class="r" style="left:0;top:0" width="983" height="572" viewBox="0 0 983 572"><path d="M420.7,275.5 L441.5,275.5 Q437.8,276.1 437.8,280.5 L437.8,286.5 Q437.8,290.9 441.5,291.5 L420.7,291.5 Q417.5,291.5 417.5,286.5 L417.5,280.5 Q417.5,275.5 420.7,275.5 Z" fill="#FDEEDC" stroke="#F8A643" stroke-width="1"/><path d="M450.5,275.5 L459.3,275.5 Q462.5,275.5 462.5,280.5 L462.5,286.5 Q462.5,291.5 459.3,291.5 L450.5,291.5 Q454.0,290.9 454.0,286.5 L454.0,280.5 Q454.0,276.1 450.5,275.5 Z" fill="#FDEEDC" stroke="#F8A643" stroke-width="1"/><path d="M74.7,354.5 L95.5,354.5 Q91.8,355.1 91.8,359.5 L91.8,365.5 Q91.8,369.9 95.5,370.5 L74.7,370.5 Q71.5,370.5 71.5,365.5 L71.5,359.5 Q71.5,354.5 74.7,354.5 Z" fill="#FDEEDC" stroke="#F8A643" stroke-width="1"/><path d="M99.5,354.5 L109.3,354.5 Q112.5,354.5 112.5,359.5 L112.5,365.5 Q112.5,370.5 109.3,370.5 L99.5,370.5 Q103.0,369.9 103.0,365.5 L103.0,359.5 Q103.0,355.1 99.5,354.5 Z" fill="#FDEEDC" stroke="#F8A643" stroke-width="1"/><path d="M271.7,354.5 L292.5,354.5 Q288.8,355.1 288.8,359.5 L288.8,365.5 Q288.8,369.9 292.5,370.5 L271.7,370.5 Q268.5,370.5 268.5,365.5 L268.5,359.5 Q268.5,354.5 271.7,354.5 Z" fill="#FDEEDC" stroke="#F8A643" stroke-width="1"/><path d="M297.5,354.5 L307.3,354.5 Q310.5,354.5 310.5,359.5 L310.5,365.5 Q310.5,370.5 307.3,370.5 L297.5,370.5 Q301.0,369.9 301.0,365.5 L301.0,359.5 Q301.0,355.1 297.5,354.5 Z" fill="#FDEEDC" stroke="#F8A643" stroke-width="1"/><path d="M471.7,354.5 L492.5,354.5 Q488.8,355.1 488.8,359.5 L488.8,365.5 Q488.8,369.9 492.5,370.5 L471.7,370.5 Q468.5,370.5 468.5,365.5 L468.5,359.5 Q468.5,354.5 471.7,354.5 Z" fill="#FDEEDC" stroke="#F8A643" stroke-width="1"/><path d="M497.5,354.5 L507.3,354.5 Q510.5,354.5 510.5,359.5 L510.5,365.5 Q510.5,370.5 507.3,370.5 L497.5,370.5 Q501.0,369.9 501.0,365.5 L501.0,359.5 Q501.0,355.1 497.5,354.5 Z" fill="#FDEEDC" stroke="#F8A643" stroke-width="1"/><path d="M55,329.5 L657,329.5 M55,347.5 L657,347.5 M55,370.5 L657,370.5 M55.5,329 L55.5,371 M255.5,329 L255.5,371 M456.5,329 L456.5,371 M656.5,329 L656.5,371" fill="none" stroke="#8E8E8E" stroke-width="1" stroke-dasharray="3,1" stroke-dashoffset="1"/><path d="M55,435.5 L657,435.5 M55,455.5 L657,455.5 M55,555.5 L657,555.5 M55.5,435 L55.5,556 M91.5,435 L91.5,556 M253.5,435 L253.5,556 M439.5,435 L439.5,556 M553.5,435 L553.5,556 M656.5,435 L656.5,556" fill="none" stroke="#000" stroke-width="1"/><rect x="42.7" y="422.9" width="11.7" height="11.4" fill="#fff" stroke="#9A9A9A" stroke-width="1"/><path d="M48.5,424.8 L48.5,433 M44.4,428.8 L52.6,428.8" stroke="#444" stroke-width="0.9"/><path d="M48.5,424.3 L47,426 L50,426 Z M48.5,433.4 L47,431.6 L50,431.6 Z M44,428.8 L45.7,427.3 L45.7,430.3 Z M53,428.8 L51.3,427.3 L51.3,430.3 Z" fill="#444"/><path d="M68.7,463.5 L89.5,463.5 Q85.8,464.1 85.8,468.5 L85.8,474.5 Q85.8,478.9 89.5,479.5 L68.7,479.5 Q65.5,479.5 65.5,474.5 L65.5,468.5 Q65.5,463.5 68.7,463.5 Z" fill="#FBFBFB" stroke="#9DB8DA" stroke-width="1"/><path d="M71.2,469.9 L68.8,471.5 L71.2,473.1 Z" fill="#9DB8DA"/><path d="M68.7,488.5 L89.5,488.5 Q85.8,489.1 85.8,493.5 L85.8,499.5 Q85.8,503.9 89.5,504.5 L68.7,504.5 Q65.5,504.5 65.5,499.5 L65.5,493.5 Q65.5,488.5 68.7,488.5 Z" fill="#FBFBFB" stroke="#9DB8DA" stroke-width="1"/><path d="M71.2,494.9 L68.8,496.5 L71.2,498.1 Z" fill="#9DB8DA"/><path d="M68.7,513.5 L89.5,513.5 Q85.8,514.1 85.8,518.5 L85.8,524.5 Q85.8,528.9 89.5,529.5 L68.7,529.5 Q65.5,529.5 65.5,524.5 L65.5,518.5 Q65.5,513.5 68.7,513.5 Z" fill="#FBFBFB" stroke="#F8A643" stroke-width="1"/><path d="M71.2,519.9 L68.8,521.5 L71.2,523.1 Z" fill="#F8A643"/><path d="M65.5,538.5 L86.3,538.5 Q89.5,538.5 89.5,543.5 L89.5,549.5 Q89.5,554.5 86.3,554.5 L65.5,554.5 Q69.0,553.9 69.0,549.5 L69.0,543.5 Q69.0,539.1 65.5,538.5 Z" fill="#FBFBFB" stroke="#F8A643" stroke-width="1"/><path d="M83.8,544.9 L86.2,546.5 L83.8,548.1 Z" fill="#F8A643"/><path d="M113.7,463.5 L134.5,463.5 Q130.8,464.1 130.8,468.5 L130.8,474.5 Q130.8,478.9 134.5,479.5 L113.7,479.5 Q110.5,479.5 110.5,474.5 L110.5,468.5 Q110.5,463.5 113.7,463.5 Z" fill="#FDEEDC" stroke="#F8A643" stroke-width="1"/><path d="M138.5,463.5 L148.3,463.5 Q151.5,463.5 151.5,468.5 L151.5,474.5 Q151.5,479.5 148.3,479.5 L138.5,479.5 Q142.0,478.9 142.0,474.5 L142.0,468.5 Q142.0,464.1 138.5,463.5 Z" fill="#FDEEDC" stroke="#F8A643" stroke-width="1"/><path d="M265.7,463.5 L286.5,463.5 Q282.8,464.1 282.8,468.5 L282.8,474.5 Q282.8,478.9 286.5,479.5 L265.7,479.5 Q262.5,479.5 262.5,474.5 L262.5,468.5 Q262.5,463.5 265.7,463.5 Z" fill="#FBFBFB" stroke="#F8A643" stroke-width="1"/><path d="M268.2,469.9 L265.8,471.5 L268.2,473.1 Z" fill="#F8A643"/><path d="M290.5,463.5 L311.3,463.5 Q314.5,463.5 314.5,468.5 L314.5,474.5 Q314.5,479.5 311.3,479.5 L290.5,479.5 Q294.0,478.9 294.0,474.5 L294.0,468.5 Q294.0,464.1 290.5,463.5 Z" fill="#FBFBFB" stroke="#F8A643" stroke-width="1"/><path d="M308.8,469.9 L311.2,471.5 L308.8,473.1 Z" fill="#F8A643"/><path d="M451.7,463.5 L472.5,463.5 Q468.8,464.1 468.8,468.5 L468.8,474.5 Q468.8,478.9 472.5,479.5 L451.7,479.5 Q448.5,479.5 448.5,474.5 L448.5,468.5 Q448.5,463.5 451.7,463.5 Z" fill="#FBFBFB" stroke="#F8A643" stroke-width="1"/><path d="M454.2,469.9 L451.8,471.5 L454.2,473.1 Z" fill="#F8A643"/><path d="M476.5,463.5 L497.3,463.5 Q500.5,463.5 500.5,468.5 L500.5,474.5 Q500.5,479.5 497.3,479.5 L476.5,479.5 Q480.0,478.9 480.0,474.5 L480.0,468.5 Q480.0,464.1 476.5,463.5 Z" fill="#FBFBFB" stroke="#F8A643" stroke-width="1"/><path d="M494.8,469.9 L497.2,471.5 L494.8,473.1 Z" fill="#F8A643"/><rect x="558.5" y="455.5" width="95" height="52" fill="#fff" stroke="#A6A6A6" stroke-width="1"/><rect x="548.5" y="455.5" width="9" height="16" fill="#D9D9D9" stroke="#A6A6A6" stroke-width="1"/><rect x="551.8" y="459" width="2.6" height="2" fill="#666"/><rect x="551.8" y="462.5" width="2.6" height="2" fill="#666"/><rect x="551.8" y="466" width="2.6" height="2" fill="#666"/><path d="M565.7,463.5 L586.5,463.5 Q582.8,464.1 582.8,468.5 L582.8,474.5 Q582.8,478.9 586.5,479.5 L565.7,479.5 Q562.5,479.5 562.5,474.5 L562.5,468.5 Q562.5,463.5 565.7,463.5 Z" fill="#FBFBFB" stroke="#F8A643" stroke-width="1"/><path d="M568.2,469.9 L565.8,471.5 L568.2,473.1 Z" fill="#F8A643"/><path d="M562.5,488.5 L583.3,488.5 Q586.5,488.5 586.5,493.5 L586.5,499.5 Q586.5,504.5 583.3,504.5 L562.5,504.5 Q566.0,503.9 566.0,499.5 L566.0,493.5 Q566.0,489.1 562.5,488.5 Z" fill="#FBFBFB" stroke="#F8A643" stroke-width="1"/><path d="M580.8,494.9 L583.2,496.5 L580.8,498.1 Z" fill="#F8A643"/><path d="M587.5,488.5 L608.3,488.5 Q611.5,488.5 611.5,493.5 L611.5,499.5 Q611.5,504.5 608.3,504.5 L587.5,504.5 Q591.0,503.9 591.0,499.5 L591.0,493.5 Q591.0,489.1 587.5,488.5 Z" fill="#FBFBFB" stroke="#9DB8DA" stroke-width="1"/><path d="M605.8,494.9 L608.2,496.5 L605.8,498.1 Z" fill="#9DB8DA"/><path d="M612.5,488.5 L633.3,488.5 Q636.5,488.5 636.5,493.5 L636.5,499.5 Q636.5,504.5 633.3,504.5 L612.5,504.5 Q616.0,503.9 616.0,499.5 L616.0,493.5 Q616.0,489.1 612.5,488.5 Z" fill="#FBFBFB" stroke="#9DB8DA" stroke-width="1"/><path d="M630.8,494.9 L633.2,496.5 L630.8,498.1 Z" fill="#9DB8DA"/><rect x="657.5" y="556.5" width="7.5" height="7.3" fill="#fff" stroke="#888" stroke-width="1"/></svg>
<div class="t " style="left:803.9px;top:132.56px;font-size:20.6px;color:#3A68B3;font-weight:normal;letter-spacing:0.220px;">XML Mapping</div>
<div class="t " style="left:804.5px;top:157.84px;font-size:12px;color:#444444;font-weight:normal;letter-spacing:-0.087px;">Custom XML Part:</div>
<div class="r" style="left:804px;top:174px;width:172px;height:21px;background:#fff;box-sizing:border-box;border:1px solid #ABABAB"></div>
<div class="t " style="left:810.8px;top:178.64px;font-size:12px;color:#444444;font-weight:normal;letter-spacing:-0.108px;">(no namespace)</div>
<div class="r" style="left:851px;top:415px;width:124px;height:18px;background:#D5E1F2"></div>
<div class="t " style="left:805.8px;top:202.84px;font-size:12px;color:#444444;font-weight:normal;letter-spacing:-0.011px;">department</div>
<div class="t " style="left:820.5px;top:220.84px;font-size:12px;color:#444444;font-weight:normal;letter-spacing:0.015px;">@department_id</div>
<div class="t " style="left:820.5px;top:238.84px;font-size:12px;color:#444444;font-weight:normal;letter-spacing:-0.047px;">@department_name</div>
<div class="t " style="left:820.5px;top:256.84px;font-size:12px;color:#444444;font-weight:normal;letter-spacing:-0.177px;">@employees_qty</div>
<div class="t " style="left:820.5px;top:274.84px;font-size:12px;color:#444444;font-weight:normal;letter-spacing:-0.208px;">@manager_name</div>
<div class="t " style="left:820.5px;top:292.84px;font-size:12px;color:#444444;font-weight:normal;letter-spacing:-0.450px;">@param1</div>
<div class="t " style="left:821.7px;top:311.24px;font-size:12px;color:#444444;font-weight:normal;letter-spacing:-0.225px;">employees</div>
<div class="t " style="left:837.3px;top:329.14px;font-size:12px;color:#444444;font-weight:normal;letter-spacing:0.000px;">employee</div>
<div class="t " style="left:852.8px;top:347.14px;font-size:12px;color:#444444;font-weight:normal;letter-spacing:-0.090px;">@first_name</div>
<div class="t " style="left:852.8px;top:365.04px;font-size:12px;color:#444444;font-weight:normal;letter-spacing:-0.211px;">@hire_date</div>
<div class="t " style="left:852.8px;top:382.94px;font-size:12px;color:#444444;font-weight:normal;letter-spacing:-0.244px;">@last_name</div>
<div class="t " style="left:852.8px;top:400.84px;font-size:12px;color:#444444;font-weight:normal;letter-spacing:0.038px;">@parent_rownum</div>
<div class="t " style="left:852.8px;top:418.84px;font-size:12px;color:#444444;font-weight:normal;letter-spacing:-0.017px;">@salary</div>
<svg class="r" style="left:0;top:0" width="983" height="572" viewBox="0 0 983 572"><path d="M950,137 L959.2,137 L954.6,142.2 Z" fill="#666"/><path d="M967.6,134.6 L976.4,143.4 M976.4,134.6 L967.6,143.4" stroke="#666" stroke-width="2.1"/><path d="M963.3,182 L971,182 L967.15,186.4 Z" fill="#666"/><path d="M814.6,310.9 L814.6,317.3 L808,317.3 Z" fill="#444"/><path d="M830.2,328.6 L830.2,335.2 L823.6,335.2 Z" fill="#444"/><rect x="807.5" y="557" width="14.5" height="15" fill="#fff" stroke="#ABABAB" stroke-width="1"/><rect x="822" y="557" width="14" height="15" fill="#DADADA"/><rect x="836" y="557" width="121.6" height="15" fill="#fff" stroke="#ABABAB" stroke-width="1"/><rect x="957.6" y="557" width="15" height="15" fill="#fff" stroke="#ABABAB" stroke-width="1"/><path d="M816.8,561 L816.8,568.5 L812.5,564.75 Z" fill="#555"/><path d="M963.2,561 L963.2,568.5 L967.5,564.75 Z" fill="#555"/></svg>
</body></html>
